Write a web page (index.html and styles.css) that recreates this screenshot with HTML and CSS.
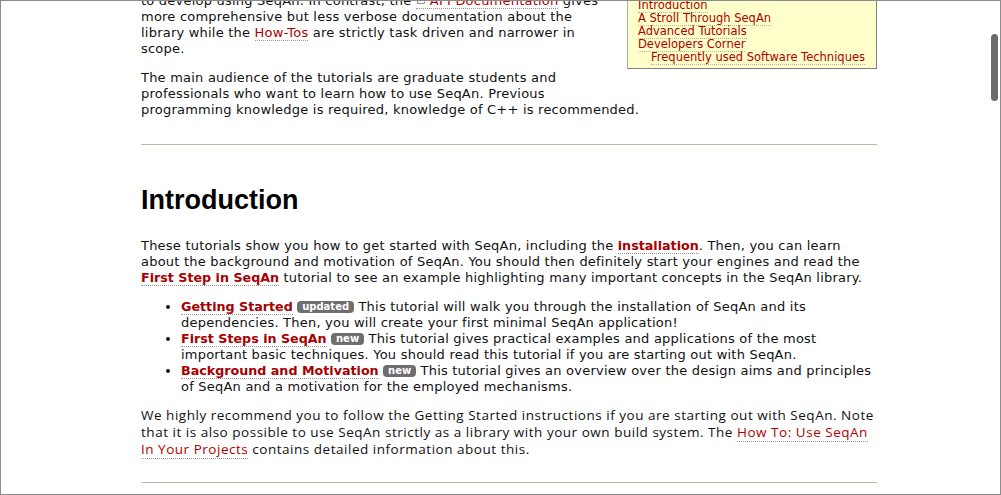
FILE: index.html
```html
<!DOCTYPE html>
<html>
<head>
<meta charset="utf-8">
<link rel="stylesheet" href="styles.css">
</head>
<body>
<div class="window">
  <div class="doc">
    <div class="toc">
      <ul>
        <li><a href="#">Introduction</a></li>
        <li><a href="#">A Stroll Through SeqAn</a></li>
        <li><a href="#">Advanced Tutorials</a></li>
        <li><a href="#">Developers Corner</a>
          <ul><li><a href="#">Frequently used Software Techniques</a></li></ul>
        </li>
      </ul>
    </div>
    <p class="lead">to develop using SeqAn. In contrast, the <a href="#" class="ext"><svg class="ext-icon" width="13" height="10" viewBox="0 0 13 10"><path d="M1.5 2.5v6h7v-2" fill="none" stroke="#8f8f8f" stroke-width="1"/><path d="M3 6.5c1-2.5 3-3.5 6-3.5" fill="none" stroke="#8f8f8f" stroke-width="1.2"/><path d="M8.5 0.8l3 2.2-3 2.2z" fill="#8f8f8f"/></svg>API Documentation</a> gives more comprehensive but less verbose documentation about the library while the <a href="#">How-Tos</a> are strictly task driven and narrower in scope.</p>
    <p>The main audience of the tutorials are graduate students and professionals who want to learn how to use SeqAn. Previous programming knowledge is required, knowledge of C++ is recommended.</p>
    <hr class="rule">
    <h1>Introduction</h1>
    <p>These tutorials show you how to get started with SeqAn, including the <a href="#" class="strong">installation</a>. Then, you can learn about the background and motivation of SeqAn. You should then definitely start your engines and read the <a href="#" class="strong">First Step in SeqAn</a> tutorial to see an example highlighting many important concepts in the SeqAn library.</p>
    <ul class="tutorials">
      <li><a href="#" class="strong">Getting Started</a> <span class="badge">updated</span> This tutorial will walk you through the installation of SeqAn and its dependencies. Then, you will create your first minimal SeqAn application!</li>
      <li><a href="#" class="strong">First Steps in SeqAn</a> <span class="badge">new</span> This tutorial gives practical examples and applications of the most important basic techniques. You should read this tutorial if you are starting out with SeqAn.</li>
      <li><a href="#" class="strong">Background and Motivation</a> <span class="badge">new</span> This tutorial gives an overview over the design aims and principles of SeqAn and a motivation for the employed mechanisms.</li>
    </ul>
    <p class="note">We highly recommend you to follow the Getting Started instructions if you are starting out with SeqAn. Note that it is also possible to use SeqAn strictly as a library with your own build system. The <a href="#">How To: Use SeqAn In Your Projects</a> contains detailed information about this.</p>
    <hr class="rule rule-end">
  </div>
  <div class="scroll-thumb"></div>
</div>
</body>
</html>
```

FILE: styles.css
```css
html, body {
  margin: 0;
  padding: 0;
  background: #ffffff;
}

.window {
  position: relative;
  width: 1001px;
  height: 495px;
  box-sizing: border-box;
  border: 1px solid #8c8c8c;
  overflow: hidden;
  background: #ffffff;
}

.doc {
  width: 736px;
  margin: -8px 0 0 140px;
  font-family: "DejaVu Sans", Verdana, sans-serif;
  font-size: 13px;
  line-height: 16px;
  letter-spacing: 0.22px;
  color: #111111;
}

.doc p {
  margin: 0 0 13px 0;
}

.doc a {
  color: #b00000;
  text-decoration: none;
  border-bottom: 1px dotted #9a9a9a;
}

.ext-icon {
  vertical-align: 0px;
  margin-right: 1px;
}

.toc {
  float: right;
  width: 250px;
  box-sizing: border-box;
  margin: 0 0 28px 20px;
  padding: 5px 8px 4px 10px;
  background: #ffffcc;
  border: 1px solid #b0b0a0;
  border-right-color: #808080;
  border-bottom-color: #808080;
  font-size: 11.5px;
  line-height: 13px;
  letter-spacing: 0;
}

.toc ul {
  list-style: none;
  margin: 0;
  padding: 0;
}

.toc ul ul {
  padding-left: 13px;
}

.toc a {
  border-bottom-color: #b8b8a0;
}

.rule {
  border: 0;
  height: 1px;
  background: #bbbbab;
  margin: 26px 0 0 0;
}

.rule-end {
  margin-top: 24px;
}

h1 {
  font-family: "Liberation Sans", Arial, sans-serif;
  font-size: 27px;
  line-height: 32px;
  font-weight: bold;
  letter-spacing: 0;
  color: #000000;
  margin: 39px 0 22px 0;
}

.strong {
  font-weight: bold;
  font-size: 12.7px;
  letter-spacing: 0;
  color: #a80000 !important;
}

.badge {
  display: inline-block;
  background: #6e6e6e;
  color: #ffffff;
  font-weight: bold;
  font-size: 10px;
  line-height: 12px;
  letter-spacing: 0;
  padding: 0 5px;
  border-radius: 4px;
  vertical-align: 1px;
}

.tutorials {
  margin: 0 0 11px 0;
  padding-left: 40px;
}

.tutorials li {
  line-height: 16px;
}

.note {
  font-family: "Open Sans", "Liberation Sans", Arial, sans-serif;
  font-size: 13.5px;
  line-height: 17px;
  letter-spacing: 0.52px;
  padding-top: 1px;
}

.scroll-thumb {
  position: absolute;
  right: 2px;
  top: 33px;
  width: 7px;
  height: 67px;
  border-radius: 4px;
  background: #6b6b6b;
}
```
